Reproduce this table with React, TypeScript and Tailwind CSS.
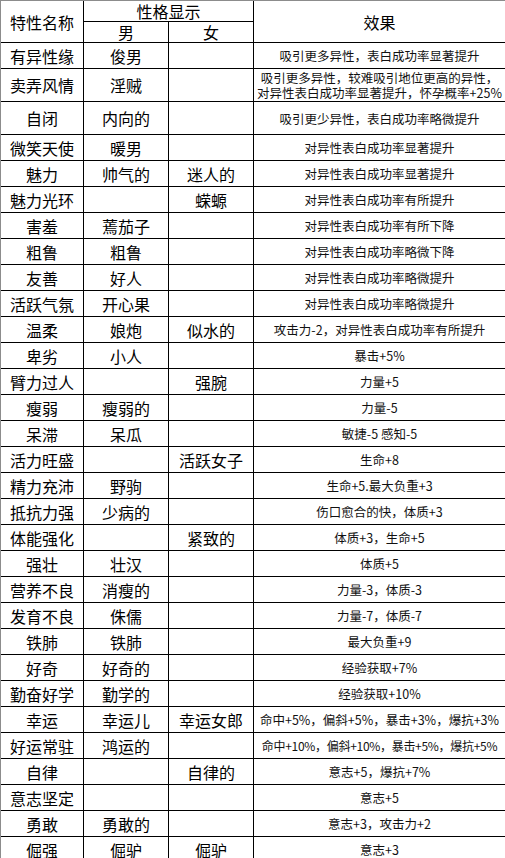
import React from "react";

type Row = {
  name: string;
  male: string;
  female: string;
  effect: React.ReactNode;
  h?: "tall";
  tight?: boolean;
};

const rows: Row[] = [
  { name: "有异性缘", male: "俊男", female: "", effect: "吸引更多异性，表白成功率显著提升" },
  {
    name: "卖弄风情",
    male: "淫贼",
    female: "",
    effect: (
      <>
        吸引更多异性，较难吸引地位更高的异性，
        <br />
        对异性表白成功率显著提升，怀孕概率+25%
      </>
    ),
    h: "tall",
  },
  { name: "自闭", male: "内向的", female: "", effect: "吸引更少异性，表白成功率略微提升", h: "tall" },
  { name: "微笑天使", male: "暖男", female: "", effect: "对异性表白成功率显著提升" },
  { name: "魅力", male: "帅气的", female: "迷人的", effect: "对异性表白成功率显著提升" },
  { name: "魅力光环", male: "", female: "蝾螈", effect: "对异性表白成功率有所提升" },
  { name: "害羞", male: "蔫茄子", female: "", effect: "对异性表白成功率有所下降" },
  { name: "粗鲁", male: "粗鲁", female: "", effect: "对异性表白成功率略微下降" },
  { name: "友善", male: "好人", female: "", effect: "对异性表白成功率略微提升" },
  { name: "活跃气氛", male: "开心果", female: "", effect: "对异性表白成功率略微提升" },
  { name: "温柔", male: "娘炮", female: "似水的", effect: "攻击力-2，对异性表白成功率有所提升" },
  { name: "卑劣", male: "小人", female: "", effect: "暴击+5%" },
  { name: "臂力过人", male: "", female: "强腕", effect: "力量+5" },
  { name: "瘦弱", male: "瘦弱的", female: "", effect: "力量-5" },
  { name: "呆滞", male: "呆瓜", female: "", effect: "敏捷-5 感知-5" },
  { name: "活力旺盛", male: "", female: "活跃女子", effect: "生命+8" },
  { name: "精力充沛", male: "野驹", female: "", effect: "生命+5.最大负重+3" },
  { name: "抵抗力强", male: "少病的", female: "", effect: "伤口愈合的快，体质+3" },
  { name: "体能强化", male: "", female: "紧致的", effect: "体质+3，生命+5" },
  { name: "强壮", male: "壮汉", female: "", effect: "体质+5" },
  { name: "营养不良", male: "消瘦的", female: "", effect: "力量-3，体质-3" },
  { name: "发育不良", male: "侏儒", female: "", effect: "力量-7，体质-7" },
  { name: "铁肺", male: "铁肺", female: "", effect: "最大负重+9" },
  { name: "好奇", male: "好奇的", female: "", effect: "经验获取+7%" },
  { name: "勤奋好学", male: "勤学的", female: "", effect: "经验获取+10%" },
  { name: "幸运", male: "幸运儿", female: "幸运女郎", effect: "命中+5%，偏斜+5%，暴击+3%，爆抗+3%" },
  {
    name: "好运常驻",
    male: "鸿运的",
    female: "",
    effect: "命中+10%，偏斜+10%，暴击+5%，爆抗+5%",
    tight: true,
  },
  { name: "自律", male: "", female: "自律的", effect: "意志+5，爆抗+7%" },
  { name: "意志坚定", male: "", female: "", effect: "意志+5" },
  { name: "勇敢", male: "勇敢的", female: "", effect: "意志+3，攻击力+2" },
  { name: "倔强", male: "倔驴", female: "倔驴", effect: "意志+3" },
];

const cell = "flex items-center justify-center border-r border-b border-black whitespace-nowrap";

export default function App() {
  return (
    <div
      className="w-[505px] h-[858px] overflow-hidden bg-white text-black"
      style={{ fontFamily: '"Noto Sans CJK SC", "Noto Sans", sans-serif' }}
    >
      <div className="w-[506px] border-l border-t border-[#8c8c8c]">
        {/* header */}
        <div className="grid grid-cols-[83px_85px_85px_252px] grid-rows-[21px_21px] text-[16px] leading-none">
          <div className={`${cell} row-span-2`}>特性名称</div>
          <div className={`${cell} col-span-2`}>性格显示</div>
          <div className={`${cell} row-span-2`}>效果</div>
          <div className={cell}>男</div>
          <div className={cell}>女</div>
        </div>

        {rows.map((r) => {
          const h = r.h === "tall" ? "h-[33px]" : "h-[26px]";
          const size = r.tight ? "text-[12px] tracking-[-0.3px]" : "text-[12.5px]";
          return (
            <div key={r.name} className="grid grid-cols-[83px_85px_85px_252px]">
              <div className={`${cell} ${h} text-[16px]`}>{r.name}</div>
              <div className={`${cell} ${h} text-[16px]`}>{r.male}</div>
              <div className={`${cell} ${h} text-[16px]`}>{r.female}</div>
              <div className={`${cell} ${h} ${size} leading-[15px] text-[#111] text-center`}>
                <span>{r.effect}</span>
              </div>
            </div>
          );
        })}
      </div>
    </div>
  );
}
